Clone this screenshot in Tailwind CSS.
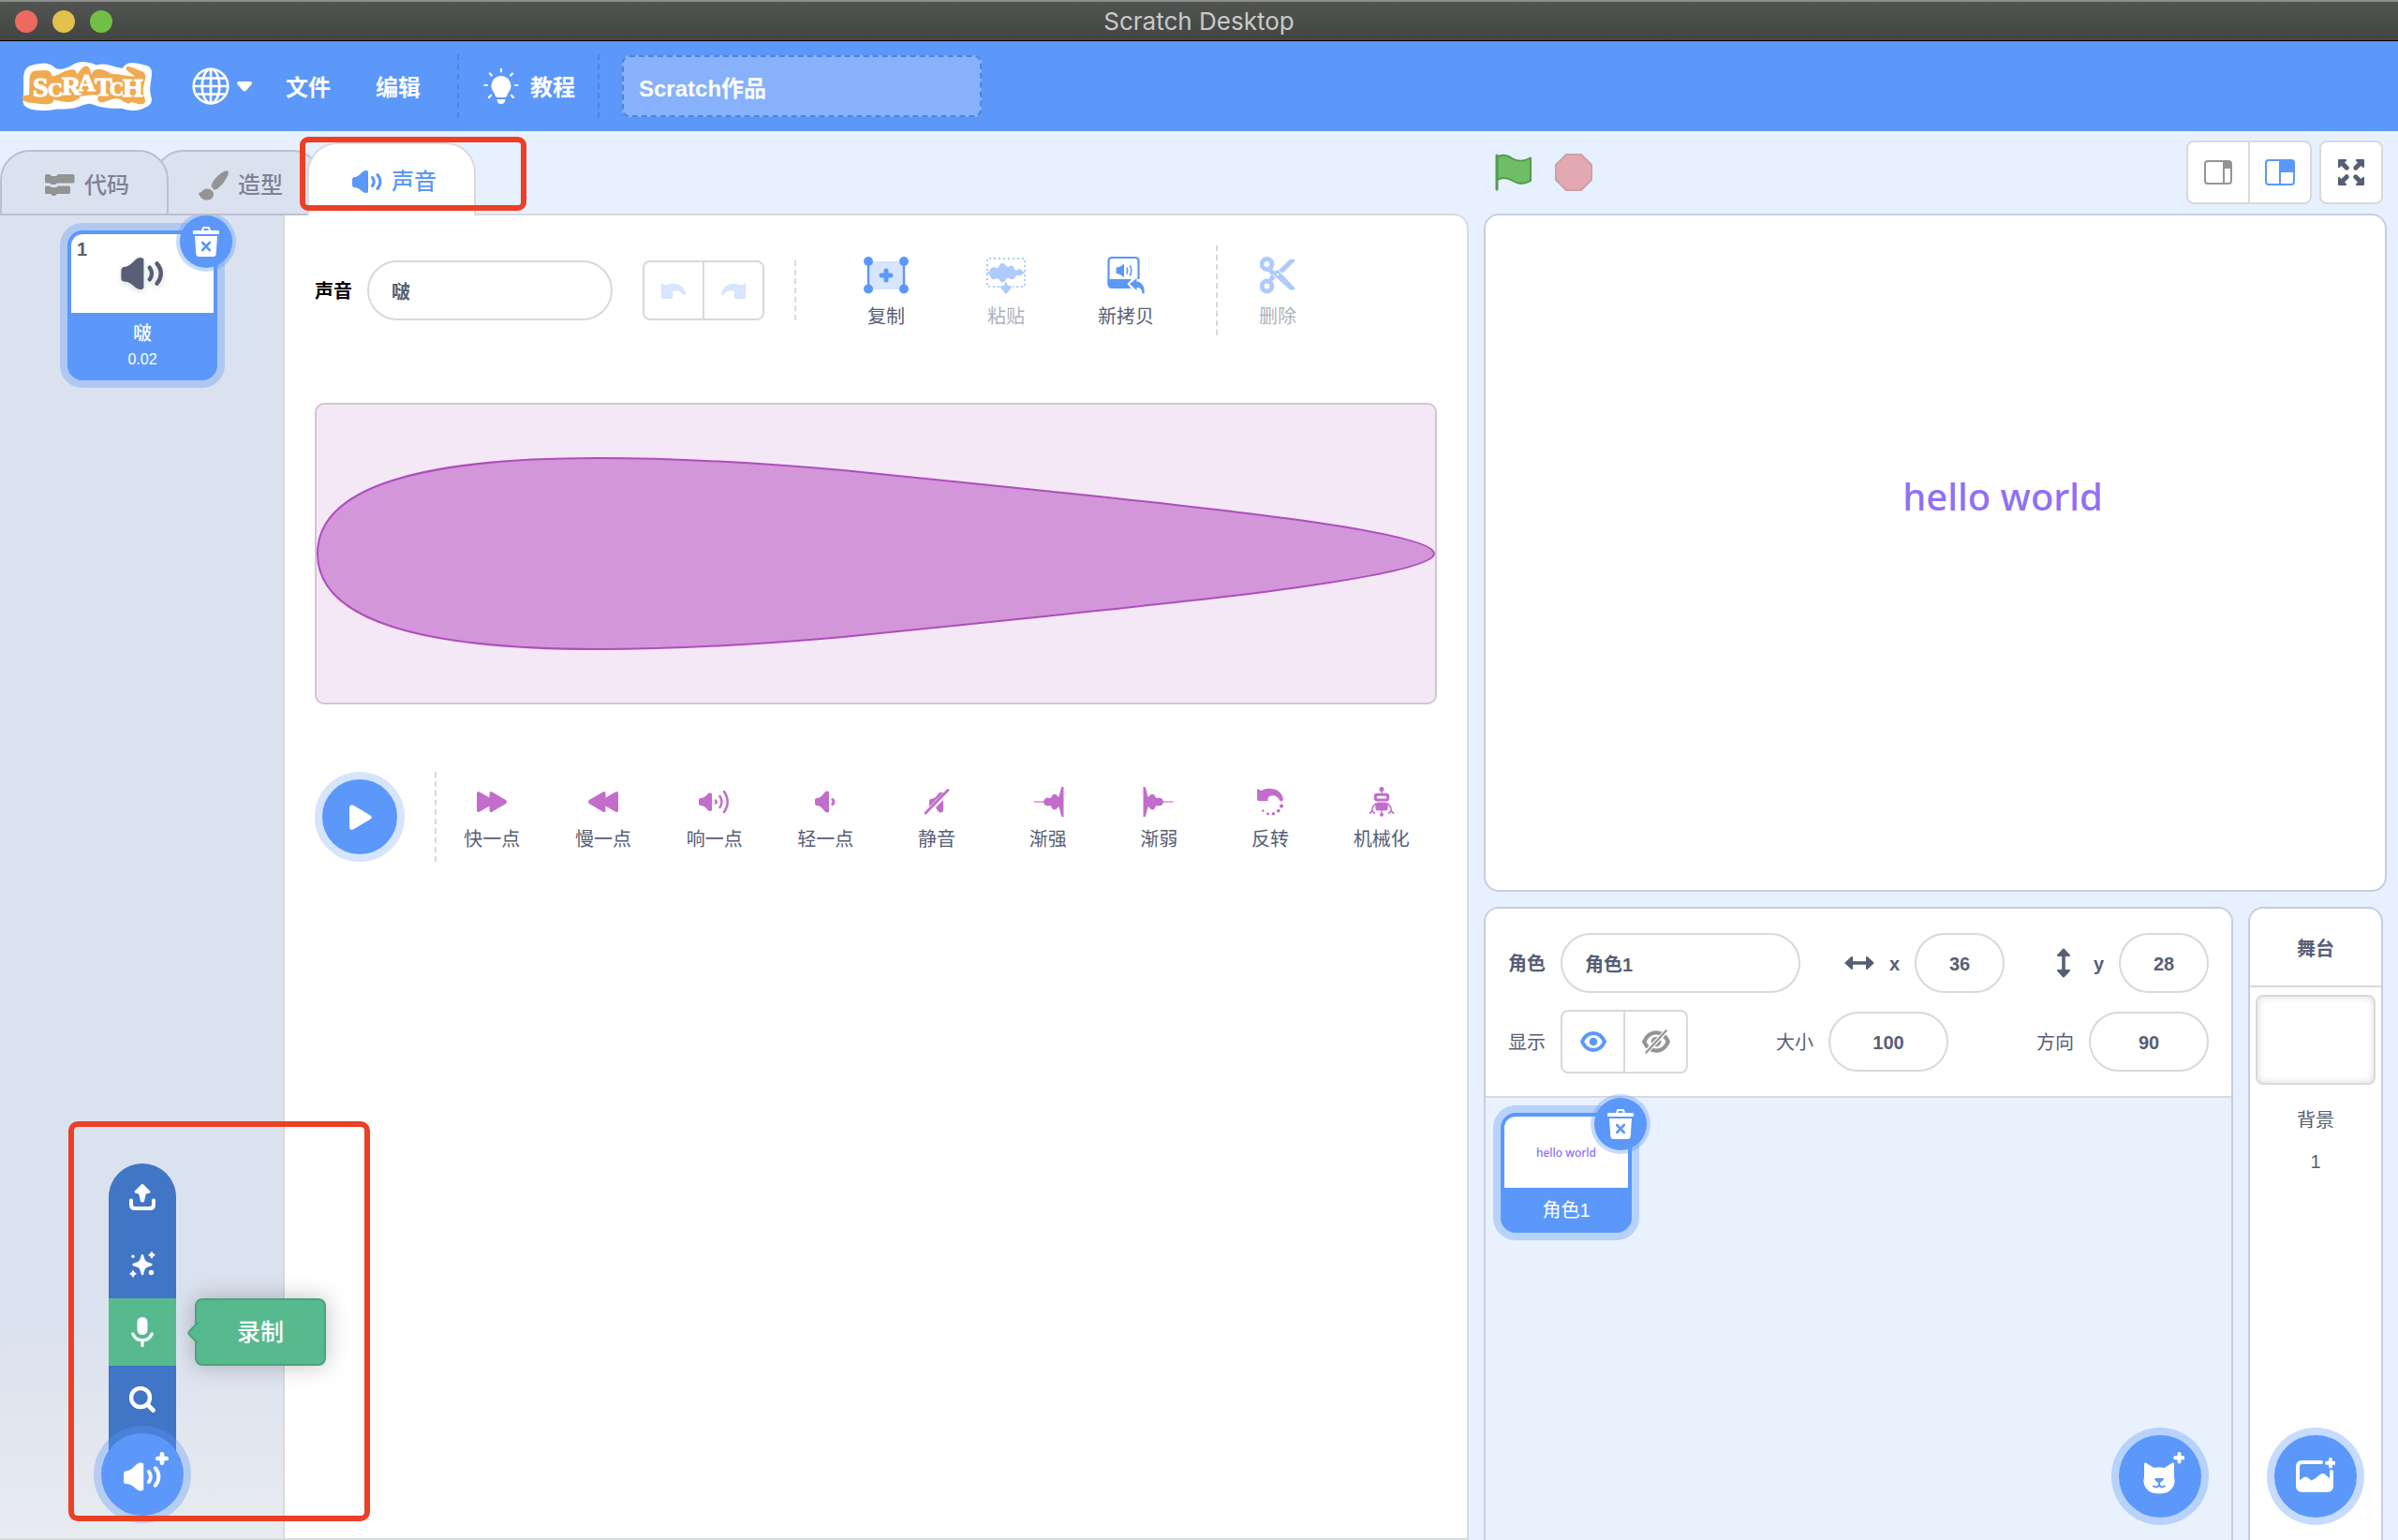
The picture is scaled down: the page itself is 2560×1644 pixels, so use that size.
<!DOCTYPE html>
<html lang="zh-CN">
<head>
<meta charset="utf-8">
<title>Scratch Desktop</title>
<script src="https://cdn.jsdelivr.net/npm/@tailwindcss/browser@4"></script>
</head>
<body class="bg-[#e6f0ff] text-[20px] text-[#575e75] font-['Liberation_Sans','Noto_Sans_CJK_SC',sans-serif]">

<svg class="hidden" aria-hidden="true">
  <symbol id="speaker" viewBox="0 0 32 24">
    <path fill="currentColor" d="M2 7C.6 7.300 0 8.500 0 10v5.500C0 17 .8 18 2.200 18 6 18 8.500 20.500 11 22.600c2 1.600 4.500 2 6 .4V1c-1.500-1.600-4-1.200-6 .4C8.500 3.500 6.500 6.800 2 7Z"/>
    <path fill="none" stroke="currentColor" stroke-width="3.200" stroke-linecap="round" d="M21.500 7.600c2 2.600 2 6.200 0 8.800M27 4.600c3.900 4.400 3.900 10.400 0 14.800"/>
  </symbol>
  <symbol id="trash" viewBox="0 0 28 32">
    <path fill="currentColor" fill-rule="evenodd" d="M1 4h8l1-3q.3-1 1.500-1h5q1.200 0 1.500 1l1 3h8q1 0 1 1v2q0 1-1 1H1Q0 8 0 7V5Q0 4 1 4Zm10.300 0h5.400l-.6-2h-4.200ZM2 10h24l-1.300 19q-.2 3-3.200 3h-15q-3 0-3.200-3Z"/>
    <path stroke="#5c98fa" stroke-width="2.600" stroke-linecap="round" d="m10.200 17 7.600 8m0-8-7.600 8"/>
  </symbol>
  <symbol id="plus" viewBox="0 0 12 12">
    <path stroke="currentColor" stroke-width="4" stroke-linecap="round" d="M6 2v8M2 6h8"/>
  </symbol>
  <symbol id="undo" viewBox="0 0 28 18">
    <path fill="currentColor" d="M0 2Q0-.5 2 .8L5 3C14-1.500 24 1 27.500 11q.8 3-1.500 3-1.500 0-2.500-2C21 8.500 16 8 12.500 10l1 3.500Q14 18 10 18H2Q0 18 0 16Z"/>
  </symbol>
</svg>

<div class="flex min-h-screen flex-col overflow-hidden">
  <!-- window title bar -->
  <div class="relative flex h-11 items-center justify-center border-t-2 border-b border-t-[#8c8e8c] border-b-black bg-gradient-to-b from-[#525452] to-[#434543]">
    <div class="absolute left-4 flex gap-4">
      <span class="size-6 rounded-full bg-[#ed6a5f]"></span>
      <span class="size-6 rounded-full bg-[#e1c04c]"></span>
      <span class="size-6 rounded-full bg-[#72bf47]"></span>
    </div>
    <span class="font-['Inter',sans-serif] text-[26px] text-[#c9cac9]">Scratch Desktop</span>
  </div>

  <!-- menu bar -->
  <header class="flex h-24 items-center bg-[#5c98fa] pl-6 text-[24px] font-bold text-white">
    <svg class="h-[54px] w-[140px]" viewBox="1 0 140 54" role="img" aria-label="Scratch">
      <path fill="#fff" stroke="#fff" stroke-width="3" stroke-linejoin="round" d="M3.500 18Q4 9 9 7T23.500 4Q30 4 35 8.500T53.500 6.500Q60 2 67 2.500T80 6Q87 4 95 6.500T108.500 9.500Q112 3 118.500 3.500T133 6.500Q138 8 137.500 14T136 26Q135 33 137 39T132 48Q125 52 118.500 51.500T107 49Q97 50 87 48T73.500 44Q66 45 60 47.500T37 50Q24 53 10 50Q2 48 3 41T3.500 18Z"/>
      <path fill="#f0aa51" stroke="#f0aa51" stroke-width="4" stroke-linejoin="round" d="M10.500 22Q10 13 15 12.500T25 12 30.500 16.500 43.500 14.500 57 14 64 11.500 72 12.500 77 14.500 93 14.500 97 18 110 17.500 118.500 12 129 13.500Q131 15 130 19T128 29 129.500 40.500 123.500 43.500 115 43 108.500 40.500 92 40.500 83.500 39 72 34.500 60 37.500 55 41 40 40.500 32 42 12.500 43 10 38Z"/>
      <text font-family="Liberation Serif, serif" fill="#fff" stroke="#fff" stroke-width="1"><tspan x="12" y="38" font-size="30">S</tspan><tspan x="28" y="38" font-size="22">C</tspan><tspan x="43" y="36" font-size="28">R</tspan><tspan x="60" y="32" font-size="26">A</tspan><tspan x="78" y="37" font-size="28">T</tspan><tspan x="94" y="37" font-size="21">C</tspan><tspan x="108" y="38" font-size="28">H</tspan></text>
    </svg>
    <button class="ml-[41px] flex items-center gap-2" aria-label="语言">
      <svg class="size-10" viewBox="0 0 40 40" fill="none" stroke="#fff" stroke-width="2.600"><circle cx="20" cy="20" r="18.300"/><ellipse cx="20" cy="20" rx="9.300" ry="18.300"/><path d="M20 2v36M2 20h36M5 11.500h30M5 28.500h30"/></svg>
      <svg class="h-[11px] w-4" viewBox="0 0 16 11"><path fill="#fff" d="M2 0h12q3 .5 1.500 3L10 9.500q-2 2-4 0L.5 3Q-.8.5 2 0Z"/></svg>
    </button>
    <button class="ml-9 w-12 pt-[3px]">文件</button>
    <button class="ml-12 w-12 pt-[3px]">编辑</button>
    <div class="ml-[39px] h-[68px] border-l-2 border-dashed border-[#4c85dd]"></div>
    <button class="ml-[26px] flex items-center gap-3">
      <svg class="h-[38px] w-[38px]" viewBox="0 0 38 38"><path fill="#fff" d="M19 8a10.500 10.500 0 0 1 10.500 10.500c0 5-3 6.500-4 10-.4 1.800-1.500 2.500-3 2.500h-7c-1.500 0-2.600-.7-3-2.500-1-3.500-4-5-4-10A10.500 10.500 0 0 1 19 8ZM14.500 33h9c0 3-2 5-4.500 5s-4.500-2-4.500-5Z"/><path stroke="#fff" stroke-width="2.200" stroke-linecap="round" d="M19 1v2.500M7 5.500l1.800 2M31 5.500l-1.800 2M1.500 18H4M34 18h2.500M6 31l2-2.200M32 31l-2-2.200"/></svg>
      <span class="pt-[3px]">教程</span>
    </button>
    <div class="ml-6 h-[68px] border-l-2 border-dashed border-[#4c85dd]"></div>
    <input aria-label="作品名称" value="Scratch作品" class="ml-6 h-[66px] w-[384px] rounded-lg border-2 border-dashed border-[#4c85dd] bg-[#87b2fb] px-4 outline-none">
  </header>

  <main class="flex flex-1">
    <!-- sound editor column -->
    <div class="flex min-w-0 flex-1 flex-col">
      <nav class="relative z-10 -mb-[2px] flex h-[90px] items-end text-[24px] font-medium text-[#7c8296]">
        <button class="relative z-[2] flex h-[70px] w-[180px] items-center justify-center gap-2.5 rounded-t-[32px] border-2 border-[#b9c1d1] bg-[#dbe2ef] pt-1.5 pl-1.5">
          <svg class="h-6 w-8" viewBox="0 0 32 24"><path fill="#949494" d="M1.500 0H5l2 2h5l2-2h16q1.500 0 1.500 1.500V8q0 1.500-1.500 1.500H13l-2 1.500H7L5 9.500H1.500Q0 9.500 0 8V1.500Q0 0 1.500 0Zm0 12.500H5l2 1.500h5l2-1.500h11.500q1.500 0 1.500 1.500v5.500q0 1.500-1.500 1.500H13l-2 2H8l-2-2H1.500Q0 21 0 19.500V14q0-1.500 1.500-1.500Z"/></svg>
          <span>代码</span>
        </button>
        <button class="relative z-[1] -ml-4 flex h-[70px] w-[180px] items-center justify-center gap-2.5 rounded-t-[32px] border-2 border-[#b9c1d1] bg-[#dbe2ef] pt-1.5 pl-1.5">
          <svg class="size-8" viewBox="0 0 32 32"><path fill="#949494" d="M31 .5c2 1 .5 6-4 12-4 5-8 8.500-10.500 8L13.500 17c.5-4 4-8.500 8-12 4-3.500 8-5.500 9.500-4.500ZM0 24c4 0 4-4.500 9-4.500 4 0 7.500 3 7 6.500C15 31 11 32 7.500 31.500 3.500 31 .5 27 0 24Z"/></svg>
          <span>造型</span>
        </button>
        <button class="relative z-[3] -ml-4 flex h-[78px] w-[180px] items-center justify-center gap-2.5 rounded-t-[32px] border-2 border-b-0 border-[#d9dadc] bg-white pt-1 pl-1.5 text-[#5c98fa]">
          <svg class="h-6 w-8"><use href="#speaker"/></svg>
          <span>声音</span>
        </button>
        <div class="pointer-events-none absolute top-1.5 left-80 z-[4] h-[79px] w-[242px] rounded-[9px] border-[6px] border-[#ec3f25]"></div>
      </nav>

      <div class="flex flex-1 rounded-tr-2xl border-t-2 border-r-2 border-b-2 border-[#d9dadc] bg-white">
        <!-- sound list -->
        <aside class="relative flex w-[304px] shrink-0 flex-col items-center border-r-2 border-[#d9dadc] bg-[linear-gradient(to_bottom,#dbe2ef_84%,#e8ecf0)] pt-4 pb-6 pl-0.5">
          <div class="relative flex size-40 flex-col items-center rounded-2xl border-4 border-[#5c98fa] bg-[#5c98fa] text-center text-white ring-8 ring-[#5c98fa]/35">
            <div class="flex h-[84px] w-full items-center justify-center rounded-t-xl bg-white text-[#575e75]">
              <svg class="h-[34px] w-[46px] drop-shadow-md"><use href="#speaker"/></svg>
            </div>
            <span class="absolute top-0.5 left-1.5 text-[20px] leading-7 font-bold text-[#575e75]">1</span>
            <span class="mt-2 leading-7 font-medium">啵</span>
            <span class="pt-0.5 text-[16px] leading-6">0.02</span>
            <button aria-label="删除声音" class="absolute -top-5 -right-5 flex size-14 items-center justify-center rounded-full bg-[#5c98fa] ring-4 ring-[#5c98fa]/35">
              <svg class="h-8 w-7"><use href="#trash"/></svg>
            </button>
          </div>

          <div class="relative z-20 mt-auto flex flex-col items-center text-white">
            <button aria-label="上传声音" class="flex size-[72px] items-center justify-center rounded-t-full bg-[#4175c6]">
              <svg class="size-7" viewBox="0 0 28 28"><path fill="none" stroke="#fff" stroke-width="4" stroke-linecap="round" stroke-linejoin="round" d="M2 17.500V22q0 4 4 4h16q4 0 4-4v-4.500"/><path fill="#fff" d="M12.800.6Q14-.4 15.200.6l7 7q.8 1.700-1 2.200-3.200 0-3.700 1.700L16 18.500q-2 2-4 0l-1.500-7Q10 9.800 6.800 9.800q-1.800-.5-1-2.200Z"/></svg>
            </button>
            <button aria-label="随机" class="flex size-[72px] items-center justify-center bg-[#4175c6]">
              <svg class="size-7" viewBox="0 0 28 28" fill="#fff"><path d="M14 3q1.200 0 1.500 1.800C16.500 10 18 11.500 23.200 12.500q3 1.300 0 3C18 16.500 16.500 18 15.500 23.200 15 26 13 26 12.500 23.200 11.500 18 10 16.500 4.800 15.500q-3-1.700 0-3C10 11.500 11.500 10 12.500 4.800Q12.800 3 14 3Z"/><path d="M24 0q.8 0 1 1.200.4 1.400 1.600 1.600 2.400.9 0 2-1.200.3-1.600 1.800-.9 2.400-2 0-.4-1.500-1.700-1.800-2-1.100 0-2Q22.600 2.600 23 1.200 23.200 0 24 0ZM4 20q.8 0 1 1.200.4 1.400 1.600 1.600 2.400.9 0 2-1.200.3-1.600 1.800-.9 2.400-2 0-.4-1.500-1.700-1.800-2-1.100 0-2Q2.600 22.600 3 21.200 3.200 20 4 20Z"/><circle cx="23.500" cy="22.500" r="2.700"/><circle cx="4" cy="5.300" r="1.700"/></svg>
            </button>
            <button aria-describedby="record-tip" aria-label="录制" class="relative flex size-[72px] items-center justify-center bg-[#57ba8f]">
              <svg class="h-8 w-6" viewBox="0 0 24 32"><rect x="6.500" width="11" height="19" rx="5.500" fill="#fff"/><path fill="none" stroke="#fff" stroke-width="3.200" stroke-linecap="round" d="M1.800 18q3 6.800 10.200 6.800T22.200 18M12 25v5.500"/></svg>
              <span id="record-tip" role="tooltip" class="absolute top-0 left-[92px] flex h-[72px] w-[140px] items-center justify-center rounded-lg border-2 border-[#4ba37c] bg-[#57ba8f] pt-0.5 text-[25px] font-medium text-white shadow-[0_0_24px_rgba(0,0,0,0.25)]">
                <svg class="absolute top-6 -left-2.5 h-[22px] w-3" viewBox="0 0 12 22"><path fill="#57ba8f" stroke="#4ba37c" stroke-width="2" d="M12 1 10 1 2 9.500q-1.300 1.500 0 3L10 21h2"/></svg>
                录制
              </span>
            </button>
            <button aria-label="选择一个声音" class="flex size-[72px] items-center justify-center bg-[#4175c6]">
              <svg class="size-7" viewBox="0 0 28 28" fill="none" stroke="#fff" stroke-linecap="round"><circle cx="12" cy="12" r="10" stroke-width="4.400"/><path stroke-width="4.600" d="m20 20 5.500 5.500"/></svg>
            </button>
            <div class="h-11 w-[72px] bg-[#4175c6]"></div>
            <button aria-label="添加声音" class="relative -mt-11 flex size-[88px] items-center justify-center rounded-full bg-[#5c98fa] ring-8 ring-[#5c98fa]/35">
              <svg class="mt-1 h-[31px] w-10"><use href="#speaker"/></svg>
              <svg class="absolute top-5 right-4 size-3.5"><use href="#plus"/></svg>
            </button>
          </div>
          <div class="pointer-events-none absolute bottom-[18px] left-[73px] z-30 h-[427px] w-[322px] rounded-[10px] border-[6px] border-[#ec3f25]"></div>
        </aside>

        <!-- editor -->
        <section class="min-w-0 flex-1 p-8">
          <div class="flex h-24 items-center">
            <label for="sound-name" class="pt-0.5 font-bold text-black">声音</label>
            <input id="sound-name" value="啵" class="ml-4 h-16 w-[262px] rounded-full border-2 border-[#d9d9d9] bg-white px-6 font-bold outline-none">
            <div class="ml-8 flex h-16 w-[130px] divide-x-2 divide-[#d9d9d9] rounded-lg border-2 border-[#d9d9d9] text-[#d7e5fe]">
              <button aria-label="撤销" class="flex flex-1 items-center justify-center"><svg class="h-[17px] w-7"><use href="#undo"/></svg></button>
              <button aria-label="重做" class="flex flex-1 items-center justify-center"><svg class="h-[17px] w-7 -scale-x-100"><use href="#undo"/></svg></button>
            </div>
            <div class="ml-8 h-16 border-l-2 border-dashed border-[#d9d9d9]"></div>
            <button class="ml-8 flex w-32 flex-col items-center gap-3 pt-1 leading-6">
              <svg class="h-10 w-12" viewBox="0 0 48 40"><path fill="#d7e5fe" d="M5 5h38v30H5z"/><path stroke="#5c98fa" stroke-width="2.400" d="M5 5v30M43 5v30"/><g fill="#5c98fa"><circle cx="5" cy="5" r="5"/><circle cx="43" cy="5" r="5"/><circle cx="5" cy="34.500" r="5"/><circle cx="43" cy="34.500" r="5"/></g><path stroke="#5c98fa" stroke-width="5" stroke-linecap="round" d="M24 15v10M19 20h10"/></svg>
              <span>复制</span>
            </button>
            <button class="flex w-32 flex-col items-center gap-3 pt-1 leading-6 text-[#575e75]/50" disabled>
              <svg class="h-10 w-[42px]" viewBox="0 0 42 40"><path fill="none" stroke="#adcbfc" stroke-width="2" stroke-dasharray="2 3" d="M14 32H1V2h40v30H28"/><path fill="#adcbfc" d="M0 16.500 3 16C5 10 8 11 11 12c2 1 3-5 6-5s4 4 7 4c2-3 5-1 6 2 2 4 3 0 6 0 2 1 2 3 5 3.500v1c-3 0-3 3-5 3-3 0-3-2-5 1-1 3-5 4-7 1-3 0-4 5-7 5s-3-5-6-4c-3 1-6 2-8-5.500l-3-.5ZM21 27q1 0 1.300 2.500.2 1.500 2 1.500 4 0 2 2.500L22 39q-1 1-2 0l-4.500-5.500q-2-2.500 2-2.500 1.800 0 2-1.500Q20 27 21 27Z"/></svg>
              <span>粘贴</span>
            </button>
            <button class="flex w-32 flex-col items-center gap-3 pt-1 leading-6">
              <svg class="h-10 w-10" viewBox="0 0 40 40"><path fill="none" stroke="#5c98fa" stroke-width="2.200" d="M33.500 24V5q0-4-4-4h-24q-4 0-4 4v25"/><path fill="#5c98fa" d="M.5 24H26l-4.500 5 4 5H5.500q-5 0-5-5ZM9.500 12q.5-1 3-1 2-.5 5.500-3.500V22q-3.500-3-5.500-3.500-2.500 0-3-1ZM24 29l7.500-6v3.500c6 .5 9 6 8 13h-2c-.5-4.500-2-6.500-6-6.500v3Z"/><path fill="none" stroke="#5c98fa" stroke-width="1.600" stroke-linecap="round" d="M21 12q1.500 3 0 6M24.500 10q2.500 5 0 10"/></svg>
              <span>新拷贝</span>
            </button>
            <div class="ml-8 h-24 border-l-2 border-dashed border-[#d9d9d9]"></div>
            <button class="flex w-32 flex-col items-center gap-3 pt-1 leading-6 text-[#575e75]/50" disabled>
              <svg class="h-10 w-[38px]" viewBox="0 0 38 40"><g fill="none" stroke="#adcbfc"><circle cx="7.500" cy="8" r="5.400" stroke-width="5"/><circle cx="7.500" cy="31.500" r="5.400" stroke-width="5"/></g><path fill="#adcbfc" d="m11 11 5.500 5.500-3 3 3.200 3.200-5.700 5.300-3-2 4-6-4-6ZM32 3q3-1.500 6 1L24.500 17.500 20 14.500ZM14.500 16.500 19 14l19 20q-3 3-6.500 1L14 19Z"/><circle cx="19" cy="19" r="1.300" fill="#fff"/></svg>
              <span>删除</span>
            </button>
          </div>

          <div class="mt-[72px] h-[322px] overflow-hidden rounded-[10px] border-2 border-[#d3c4d5] bg-[#f4e8f6]">
            <svg class="size-full" viewBox="0 0 1194 318" preserveAspectRatio="none"><path fill="#d396d9" stroke="#ae4dbd" stroke-width="2" vector-effect="non-scaling-stroke" d="M1 159C1 88 112 57 300 57 392 57 472 62 562 70L777 92C912 106 1193 134 1193 159 1193 184 912 212 777 226L562 248C472 256 392 261 300 261 112 261 1 230 1 159Z"/></svg>
          </div>

          <div class="mt-[72px] flex h-24 items-center text-[#575e75]">
            <button aria-label="播放" class="flex size-24 shrink-0 items-center justify-center rounded-full border-8 border-[#d6e4fe] bg-[#5c98fa]">
              <svg class="ml-0.5 h-[27px] w-6" viewBox="0 0 24 27"><path fill="#fff" d="M0 3Q.3-1 4 .6L22 11.200q3.500 2.300 0 4.600L4 26.400Q.3 28 0 24Z"/></svg>
            </button>
            <div class="ml-8 h-24 border-l-2 border-dashed border-[#d9d9d9]"></div>
            <div class="flex flex-1 pt-1">
              <button class="flex flex-1 flex-col items-center gap-3 leading-6"><svg class="h-8 w-8" viewBox="0 0 32 32" fill="#c26dcb"><path d="M0 7q.3-3 3-1.500l10.500 6V7q.3-3 3-1.500L31 14q2 2 0 4l-14.500 8.500q-2.700 1.500-3-1.500v-4.500L3 26.500Q.3 28 0 25Z"/></svg>快一点</button>
              <button class="flex flex-1 flex-col items-center gap-3 leading-6"><svg class="h-8 w-8" viewBox="0 0 32 32" fill="#c26dcb"><path d="M32 7q-.3-3-3-1.500l-10.500 6V7q-.3-3-3-1.500L1 14q-2 2 0 4l14.500 8.500q2.700 1.500 3-1.500v-4.500l10.500 6q2.700 1.500 3-1.500Z"/></svg>慢一点</button>
              <button class="flex flex-1 flex-col items-center gap-3 leading-6"><svg class="h-8 w-[34px]" viewBox="0 0 34 32"><path fill="#c26dcb" d="M0 14q0-2 2-2Q6 12 9 8q2-2.500 5-.8v18q-3 1.500-5-1Q6 20 2 20q-2 0-2-2Z"/><path fill="none" stroke="#c26dcb" stroke-width="2.400" stroke-linecap="round" d="M18 14.500q1.400 1.500 0 3M22.500 10q4 6 0 12M27 5q7.500 11 0 22"/></svg>响一点</button>
              <button class="flex flex-1 flex-col items-center gap-3 leading-6"><svg class="h-8 w-[22px]" viewBox="0 0 22 32"><path fill="#c26dcb" d="M0 14q0-2 2-2Q6 12 9.500 7q2-3.500 5.500-2v22q-3.500 1.500-5.500-2Q6 20 2 20q-2 0-2-2Z"/><path fill="none" stroke="#c26dcb" stroke-width="3" stroke-linecap="round" d="M18.800 13.500q2.400 2.500 0 5"/></svg>轻一点</button>
              <button class="flex flex-1 flex-col items-center gap-3 leading-6"><svg class="h-8 w-7" viewBox="0 0 28 32"><path fill="#c26dcb" d="M6 15q0-2 2.500-2.300Q13 12 15 8q2-3 6-1.800L6 21ZM21 14v12q-3 3-6-.5L13 22Z"/><path stroke="#c26dcb" stroke-width="2.800" stroke-linecap="round" d="M2 28 26 3.500"/></svg>静音</button>
              <button class="flex flex-1 flex-col items-center gap-3 leading-6"><svg class="h-8 w-[34px]" viewBox="0 0 34 33"><path stroke="#dca9e2" stroke-width="2" d="M1 16.500h14"/><path fill="#c26dcb" d="M34 0v33h-2C30 29 30 24 28.500 22c-1.500-.5-1 3-4.500 3s-3-4.500-5-4.500-1.500 1-3.500.500S12 19 12 16.500s1.500-4 3.500-4.500 1.500.5 3.500.5 1.500-4.500 5-4.500 3 3.500 4.500 3C30 9 30 4 32 0Z"/></svg>渐强</button>
              <button class="flex flex-1 flex-col items-center gap-3 leading-6"><svg class="h-8 w-[34px] -scale-x-100" viewBox="0 0 34 33"><path stroke="#dca9e2" stroke-width="2" d="M1 16.500h14"/><path fill="#c26dcb" d="M34 0v33h-2C30 29 30 24 28.500 22c-1.500-.5-1 3-4.500 3s-3-4.500-5-4.500-1.500 1-3.500.500S12 19 12 16.500s1.500-4 3.500-4.500 1.500.5 3.500.5 1.500-4.500 5-4.500 3 3.500 4.500 3C30 9 30 4 32 0Z"/></svg>渐弱</button>
              <button class="flex flex-1 flex-col items-center gap-3 leading-6"><svg class="h-8 w-7" viewBox="0 0 28 32" fill="#c26dcb"><path d="M0 4Q0 1 2.500 3L4 4.200C13-1 26 2 28 13q-.5 3.500-3.500 2C22 9 15 7.500 12 11.500q-1 2-.3 3.500h-10Q0 15 0 13Z"/><circle cx="26" cy="20.500" r="2.100"/><circle cx="22.800" cy="25.600" r="1.900"/><circle cx="17.500" cy="28.700" r="1.700"/><circle cx="11.500" cy="28.700" r="1.500"/><circle cx="6.300" cy="25.500" r="1.300"/></svg>反转</button>
              <button class="flex flex-1 flex-col items-center gap-3 leading-6"><svg class="h-8 w-7" viewBox="0 0 28 33"><g fill="#c26dcb"><circle cx="14" cy="2.600" r="2.600"/><circle cx="14" cy="30.600" r="2.100"/><path d="M13.300 4h1.400v4h-1.400zM13.300 25h1.400v5h-1.400z"/><path fill-rule="evenodd" d="M9 7h10q3.500 0 3.500 3v2.500q0 3.500-3.500 3.500H9q-3.500 0-3.500-3.500V10Q5.500 7 9 7Zm1 3q-1.500 0-1.500 1.500T10 13h8q1.500 0 1.500-1.500T18 10Z"/><path d="M9.500 17h9q2.500 1.500 2.500 4t-1 5H8q-1-2.500-1-5t2.500-4Z"/></g><path fill="none" stroke="#c26dcb" stroke-width="1.700" stroke-linecap="round" d="M7.500 18.500Q3 22 3.500 26.500L1 29M3.500 26.500 6 29M20.500 18.500q4.500 3.500 4 8L27 29M24.500 26.500 22 29"/></svg>机械化</button>
            </div>
          </div>
        </section>
      </div>
    </div>

    <!-- stage and sprites column -->
    <div class="flex w-[992px] shrink-0 flex-col pr-3 pl-4">
      <div class="flex h-[88px] items-center pr-1 pl-3">
        <button aria-label="运行"><svg class="h-10 w-10" viewBox="0 0 40 40"><path fill="#6fbd66" stroke="#569a4b" stroke-width="2" stroke-linejoin="round" d="M2 3.500C9 0 14 2 19 5.500 25 9 31 8.500 38 4.500V29C31 33 25 33 19 29 14 25.500 9 24.500 2 28Z"/><path stroke="#569a4b" stroke-width="3" stroke-linecap="round" d="M2 2v36"/></svg></button>
        <button aria-label="停止" class="ml-6"><svg class="size-10" viewBox="0 0 40 40"><path fill="#e3a9b0" stroke="#cfa0a8" stroke-width="2" stroke-linejoin="round" d="M12 1h16l11 11v16L28 39H12L1 28V12Z"/></svg></button>
        <div class="ml-auto flex h-[68px] w-[134px] divide-x-2 divide-[#d9d9d9] rounded-lg border-2 border-[#d9d9d9] bg-white">
          <button aria-label="小舞台" class="flex flex-1 items-center justify-center"><svg class="h-[26px] w-[30px]" viewBox="0 0 30 26"><path fill="none" stroke="#949494" stroke-width="2" d="M4 1h22q3 0 3 3v18q0 3-3 3H4q-3 0-3-3V4q0-3 3-3ZM21 1v24"/><path fill="#949494" d="M21 1h6q2 1 2 3v5h-8z"/></svg></button>
          <button aria-label="大舞台" class="flex flex-1 items-center justify-center"><svg class="h-7 w-8" viewBox="0 0 32 28"><path fill="none" stroke="#5c98fa" stroke-width="2" d="M4 1h24q3 0 3 3v20q0 3-3 3H4q-3 0-3-3V4q0-3 3-3ZM16 1v26"/><path fill="#5c98fa" d="M16 1h13q2 1 2 3v10H16z"/></svg></button>
        </div>
        <button aria-label="全屏" class="ml-2 flex size-[68px] items-center justify-center rounded-lg border-2 border-[#d9d9d9] bg-white">
          <svg class="size-7" viewBox="0 0 28 28" fill="#575e75"><g id="corner"><path d="M1 0h7q2 .5.500 2L7 3.500l4.500 4.500q1 2-.5 3t-3 .5L3.500 7 2 8.500Q.5 10 0 8V1Q0 0 1 0Z"/></g><use href="#corner" transform="rotate(90 14 14)"/><use href="#corner" transform="rotate(180 14 14)"/><use href="#corner" transform="rotate(270 14 14)"/></svg>
        </button>
      </div>

      <div class="flex h-[724px] justify-center rounded-2xl border-2 border-[#c6cede] bg-white pl-[144px]">
        <span class="mt-[270px] font-['Noto_Sans',sans-serif] text-[40px] leading-[60px] font-medium text-[#9070f5]">hello world</span>
      </div>

      <div class="mt-4 flex flex-1 gap-4 pr-1">
        <section class="relative flex flex-1 flex-col overflow-hidden rounded-t-2xl border-2 border-b-0 border-[#c6cede] bg-[#e9f1fc]">
          <div class="flex h-[202px] flex-col gap-[18px] border-b-2 border-[#d9d9d9] bg-white px-6 pt-[26px] font-bold">
            <div class="flex justify-between">
              <div class="flex items-center gap-4">
                <label for="sprite-name" class="pt-0.5">角色</label>
                <input id="sprite-name" value="角色1" class="h-16 w-64 rounded-full border-2 border-[#d9d9d9] px-6 outline-none">
              </div>
              <div class="flex items-center gap-4">
                <svg class="size-8" viewBox="0 0 32 32"><path stroke="#575e75" stroke-width="3.600" d="M6 16h20"/><path fill="#575e75" stroke="#575e75" stroke-width="2" stroke-linejoin="round" d="M1.500 16 8 10v12ZM30.500 16 24 10v12Z"/></svg>
                <label for="pos-x" class="pt-0.5">x</label>
                <input id="pos-x" value="36" class="h-16 w-24 rounded-full border-2 border-[#d9d9d9] pt-0.5 text-center outline-none">
              </div>
              <div class="flex items-center gap-4">
                <svg class="size-8 rotate-90" viewBox="0 0 32 32"><path stroke="#575e75" stroke-width="3.600" d="M6 16h20"/><path fill="#575e75" stroke="#575e75" stroke-width="2" stroke-linejoin="round" d="M1.500 16 8 10v12ZM30.500 16 24 10v12Z"/></svg>
                <label for="pos-y" class="pt-0.5">y</label>
                <input id="pos-y" value="28" class="h-16 w-24 rounded-full border-2 border-[#d9d9d9] pt-0.5 text-center outline-none">
              </div>
            </div>
            <div class="flex justify-between">
              <div class="flex items-center gap-4">
                <span class="pt-0.5 font-normal">显示</span>
                <div class="flex h-[68px] w-[136px] divide-x-2 divide-[#d9d9d9] rounded-lg border-2 border-[#d9d9d9]">
                  <button aria-label="显示" class="flex flex-1 items-center justify-center"><svg class="h-6 w-7" viewBox="0 0 28 24"><path fill="none" stroke="#5c98fa" stroke-width="4" d="M2 12Q6 3 14 3t12 9q-4 9-12 9T2 12Z"/><circle cx="14" cy="12" r="4.300" fill="#5c98fa"/></svg></button>
                  <button aria-label="隐藏" class="flex flex-1 items-center justify-center"><svg class="h-[26px] w-[30px]" viewBox="0 0 28 24"><path fill="none" stroke="#949494" stroke-width="4" d="M2 12Q6 3 14 3t12 9q-4 9-12 9T2 12Z"/><circle cx="14" cy="12" r="5" fill="#949494"/><path stroke="#fff" stroke-width="4.400" d="M3 23.500 25 .5"/><path stroke="#949494" stroke-width="2" stroke-linecap="round" d="M4 23 24 1"/></svg></button>
                </div>
              </div>
              <div class="flex items-center gap-4">
                <label for="size" class="pt-0.5 font-normal">大小</label>
                <input id="size" value="100" class="h-16 w-32 rounded-full border-2 border-[#d9d9d9] pt-0.5 text-center outline-none">
              </div>
              <div class="flex items-center gap-4">
                <label for="direction" class="pt-0.5 font-normal">方向</label>
                <input id="direction" value="90" class="h-16 w-32 rounded-full border-2 border-[#d9d9d9] pt-0.5 text-center outline-none">
              </div>
            </div>
          </div>
          <div class="p-4">
            <div class="relative h-32 w-[140px] rounded-2xl border-4 border-[#5c98fa] bg-[#5c98fa] text-center text-white ring-8 ring-[#5c98fa]/35">
              <div class="flex h-[76px] items-center justify-center rounded-t-xl bg-white pt-0.5 font-['Noto_Sans',sans-serif] text-[12px] font-medium text-[#9070f5]">hello world</div>
              <span class="block pt-2.5 leading-7">角色1</span>
              <button aria-label="删除角色" class="absolute -top-5 -right-5 flex size-14 items-center justify-center rounded-full bg-[#5c98fa] ring-4 ring-[#5c98fa]/35">
                <svg class="h-8 w-7"><use href="#trash"/></svg>
              </button>
            </div>
          </div>
          <button aria-label="选择一个角色" class="mt-auto mr-8 mb-6 flex size-[88px] items-center justify-center self-end rounded-full bg-[#5c98fa] text-white ring-8 ring-[#5c98fa]/35">
            <svg class="ml-1 -mt-1.5 h-[46px] w-12" viewBox="0 0 48 46"><path fill="#fff" d="M5 12.500q1-1.500 2.500-.5l8 5q5-1.500 11 0l8-5q1.500-1 2.500.5V27q1.500 5-1 10-3.500 7.500-15 7.500T6 37q-2.500-5-1-10Z"/><path fill="#5c98fa" d="M17 28h8q1.500.5.500 2L22 33h-2l-3.500-3q-1-1.500.5-2Z"/><path fill="none" stroke="#5c98fa" stroke-width="2" stroke-linecap="round" d="M21 32v3q-2 4-6 1.500M21 35q2 4 6 1.500"/><path stroke="#fff" stroke-width="4" stroke-linecap="round" d="M42.500 2v8.500M38.200 6.200h8.600"/></svg>
          </button>
        </section>

        <section class="flex w-36 flex-col items-center rounded-t-2xl border-2 border-b-0 border-[#c6cede] bg-white">
          <div class="flex h-[84px] w-full items-center justify-center border-b-2 border-[#d9d9d9] pt-1 font-bold">舞台</div>
          <div class="mt-2 h-24 w-32 rounded-lg border-2 border-[#d9d9d9] shadow-[inset_0_0_8px_rgba(0,0,0,0.15)]"></div>
          <span class="mt-6 leading-7">背景</span>
          <span class="mt-4 leading-7">1</span>
          <button aria-label="选择一个背景" class="mt-auto mb-6 flex size-[88px] items-center justify-center rounded-full bg-[#5c98fa] ring-8 ring-[#5c98fa]/35">
            <svg class="-mt-1 h-10 w-[42px]" viewBox="0 0 42 40"><path fill="none" stroke="#fff" stroke-width="4" stroke-linecap="round" stroke-linejoin="round" d="M27 7H7q-5 0-5 5v20q0 5 5 5h26q5 0 5-5V17"/><path fill="#fff" d="M2 27q3-1 5-3 3.500-3 6.500 0l3 2.500q5-2 8-5.500 5-4 8 0l5.500 5v9l-4 2H5l-3-2Z"/><path stroke="#fff" stroke-width="4" stroke-linecap="round" d="M37 4v7.500M33 7.800h7.500"/></svg>
          </button>
        </section>
      </div>
    </div>
  </main>
</div>
</body>
</html>
